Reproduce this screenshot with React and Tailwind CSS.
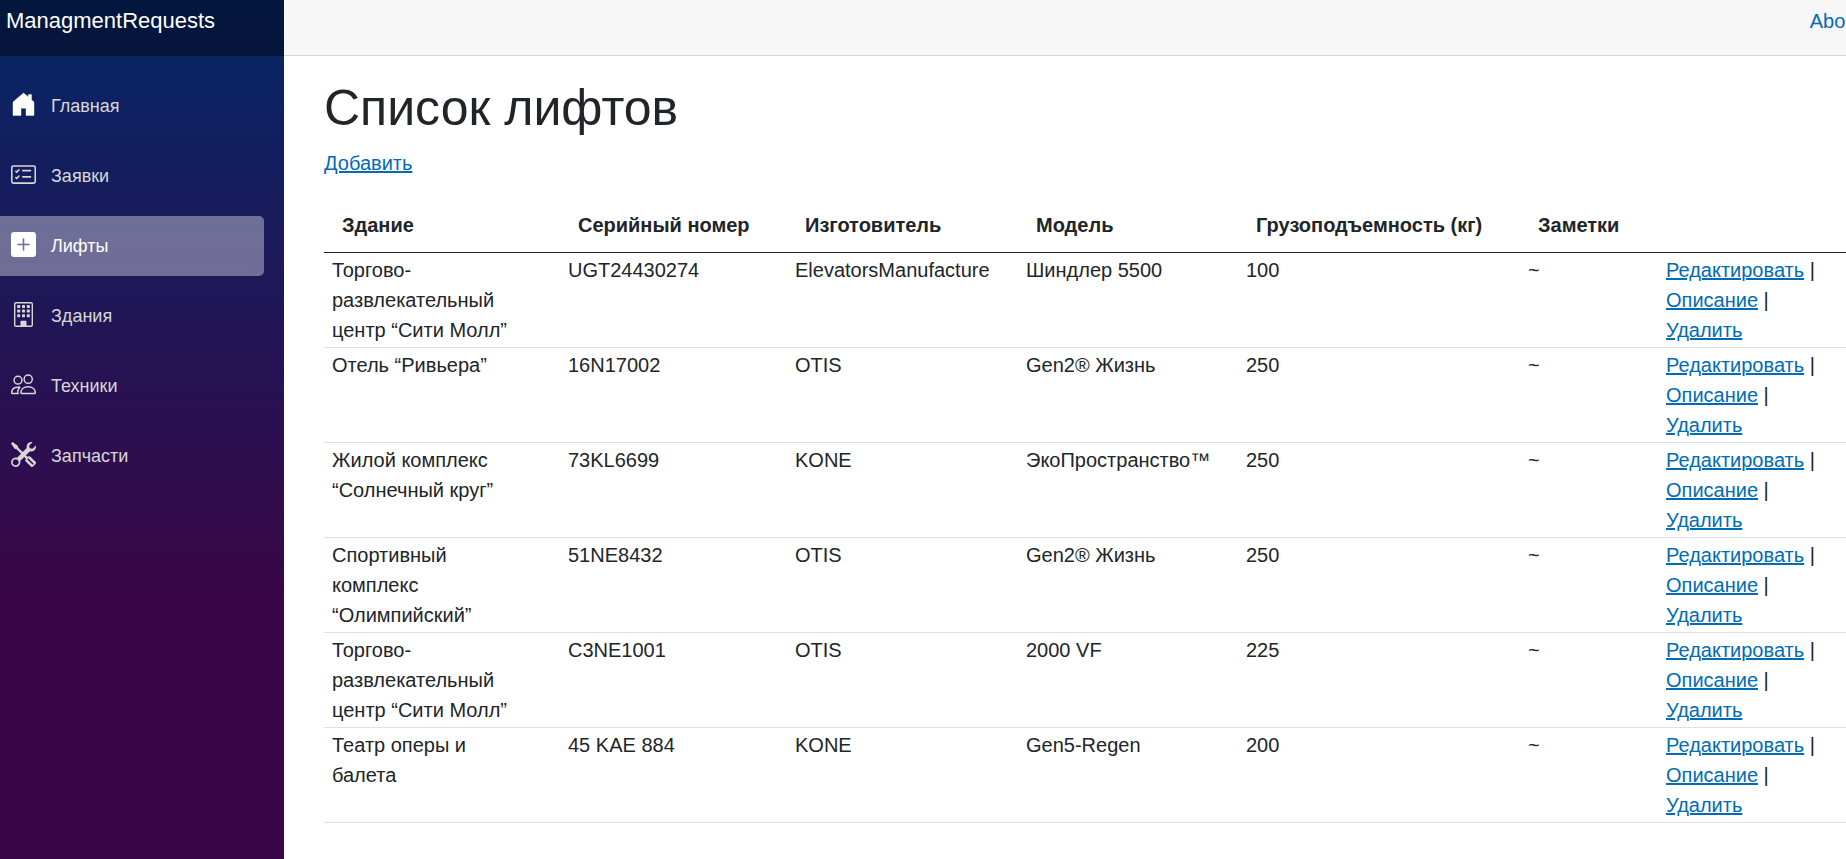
import { BsCardChecklist, BsPlusSquareFill, BsTools } from "react-icons/bs";

function HomeIcon(props) {
  return (
    <svg viewBox="0 0 25 25" fill="currentColor" {...props}>
      <path d="M12.5 1 17.3 5V2.6h3.2v5.2L23 10v13.4h-8V16.2h-5v7.2H2V10z" stroke="currentColor" strokeWidth=".4" strokeLinejoin="round" />
    </svg>
  );
}

function BuildingIcon(props) {
  return (
    <svg viewBox="0 0 25 25" fill="currentColor" {...props}>
      <rect x="3.7" y=".7" width="17.6" height="23.6" rx="1.4" fill="none" stroke="currentColor" strokeWidth="1.4" />
      {[3, 7.6, 12.2].map((y) =>
        [6.2, 11, 15.8].map((x) => <rect key={`${x}-${y}`} x={x} y={y} width="3" height="3" rx=".6" />)
      )}
      <path d="M9.5 24.5v-5a.8.8 0 0 1 .8-.8h4.4a.8.8 0 0 1 .8.8v5z" />
    </svg>
  );
}

function PeopleIcon(props) {
  return (
    <svg viewBox="0 0 25 25" fill="none" stroke="currentColor" strokeWidth="1.5" strokeLinecap="round" strokeLinejoin="round" {...props}>
      <circle cx="17.2" cy="7.2" r="4.1" />
      <circle cx="7" cy="8.2" r="3.9" />
      <path d="M11.3 21.6c-1 0-1.5-.6-1.4-1.5.3-2.900 3-5.300 7.200-5.300s6.900 2.400 7.200 5.300c.1.900-.4 1.500-1.400 1.500z" />
      <path d="M7.200 21.600H1.900c-.9 0-1.300-.6-1.200-1.400.3-2.800 2.500-5 6.300-5h1.900c-1.500 1.400-2.300 3.500-2.100 5.200" />
    </svg>
  );
}

const navItems = [
  { label: "Главная", icon: HomeIcon, iconClass: "text-white" },
  { label: "Заявки", icon: BsCardChecklist },
  { label: "Лифты", icon: BsPlusSquareFill, active: true },
  { label: "Здания", icon: BuildingIcon },
  { label: "Техники", icon: PeopleIcon },
  { label: "Запчасти", icon: BsTools },
];

const columns = [
  { title: "Здание", width: "w-[236px]" },
  { title: "Серийный номер", width: "w-[227px]" },
  { title: "Изготовитель", width: "w-[231px]" },
  { title: "Модель", width: "w-[220px]" },
  { title: "Грузоподъемность (кг)", width: "w-[282px]" },
  { title: "Заметки", width: "w-[138px]" },
];

const lifts = [
  ["Торгово-развлекательный центр “Сити Молл”", "UGT24430274", "ElevatorsManufacture", "Шиндлер 5500", "100", "~"],
  ["Отель “Ривьера”", "16N17002", "OTIS", "Gen2® Жизнь", "250", "~"],
  ["Жилой комплекс “Солнечный круг”", "73KL6699", "KONE", "ЭкоПространство™", "250", "~"],
  ["Спортивный комплекс “Олимпийский”", "51NE8432", "OTIS", "Gen2® Жизнь", "250", "~"],
  ["Торгово-развлекательный центр “Сити Молл”", "C3NE1001", "OTIS", "2000 VF", "225", "~"],
  ["Театр оперы и балета", "45 KAE 884", "KONE", "Gen5-Regen", "200", "~"],
];

function NavItem({ label, icon: Icon, active, iconClass = "" }) {
  return (
    <li className="pr-5 pb-[10px]">
      <a
        href="#"
        aria-current={active ? "page" : undefined}
        className={`flex h-[60px] items-center gap-[15px] rounded-r-[5px] pl-[11px] text-[18px] ${
          active ? "bg-white/37 text-white" : "text-[#d7d7d7]"
        }`}
      >
        <Icon className={`mb-[3px] size-[25px] ${iconClass}`} aria-hidden="true" />
        <span>{label}</span>
      </a>
    </li>
  );
}

function TextLink({ children }) {
  return (
    <a href="#" className="text-[#006bb7] underline">
      {children}
    </a>
  );
}

export default function App() {
  return (
    <div className="flex min-h-screen bg-white font-['Liberation_Sans',Arial,sans-serif] text-[20px] leading-[30px] text-[#212529]">
      <aside className="w-[284px] shrink-0 bg-[linear-gradient(180deg,rgb(5,39,103)_0%,#3a0647_70%)]">
        <div className="flex h-14 items-start bg-black/40 pt-[6px] pl-[6px]">
          <a href="#" className="text-[22px] text-white">
            ManagmentRequests
          </a>
        </div>
        <nav className="pt-5">
          <ul>
            {navItems.map((item) => (
              <NavItem key={item.label} {...item} />
            ))}
          </ul>
        </nav>
      </aside>

      <div className="min-w-0 flex-1 overflow-hidden">
        <header className="flex h-14 items-start justify-end border-b border-[#d6d5d5] bg-[#f7f7f7] pt-[6px]">
          <a href="#" className="-mr-4 text-[#006bb7]">
            About
          </a>
        </header>

        <main className="pt-[22px] pl-10">
          <h1 className="mb-[10px] text-[50px] leading-[60px]">Список лифтов</h1>
          <p className="mb-5">
            <TextLink>Добавить</TextLink>
          </p>

          <table className="w-full table-fixed border-separate border-spacing-0">
            <thead>
              <tr>
                {columns.map((column) => (
                  <th
                    key={column.title}
                    scope="col"
                    className={`border-b border-[#212529] py-3 pl-[18px] text-left font-bold whitespace-nowrap ${column.width}`}
                  >
                    {column.title}
                  </th>
                ))}
                <td className="border-b border-[#212529]" />
              </tr>
            </thead>
            <tbody>
              {lifts.map((lift, row) => (
                <tr key={row} className="align-top">
                  {lift.map((value, column) => (
                    <td key={column} className="border-b border-[#dee2e6] py-[2px] pr-8 pl-2">
                      {value}
                    </td>
                  ))}
                  <td className="border-b border-[#dee2e6] py-[2px] pl-2">
                    <TextLink>Редактировать</TextLink> | <TextLink>Описание</TextLink> |{" "}
                    <TextLink>Удалить</TextLink>
                  </td>
                </tr>
              ))}
            </tbody>
          </table>
        </main>
      </div>
    </div>
  );
}
